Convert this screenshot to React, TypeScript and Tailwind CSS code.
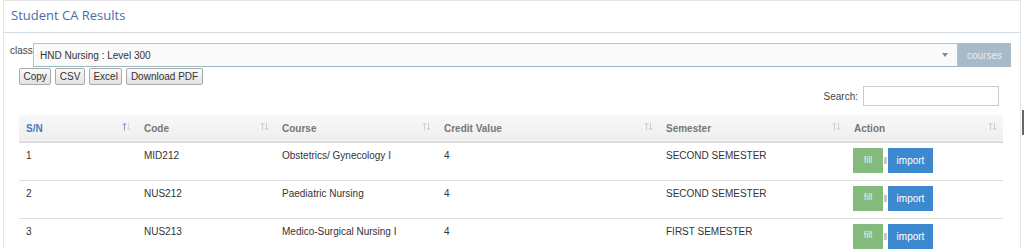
import React from "react";

function SortIcon({ active }: { active?: boolean }) {
  const up = active ? "#7a9cc6" : "#cfcfcf";
  const down = active ? "#dadada" : "#cfcfcf";
  return (
    <svg width="9" height="9" viewBox="0 0 9 9" className="shrink-0">
      <path d="M2.5 8.5V1.2M0.8 3L2.5 1.2L4.2 3" stroke={up} strokeWidth="1" fill="none" />
      <path d="M6.5 0.5V7.8M4.8 6L6.5 7.8L8.2 6" stroke={down} strokeWidth="1" fill="none" />
    </svg>
  );
}

const cols = [
  { label: "S/N", w: "w-[118px]" },
  { label: "Code", w: "w-[138px]" },
  { label: "Course", w: "w-[162px]" },
  { label: "Credit Value", w: "w-[222px]" },
  { label: "Semester", w: "w-[188px]" },
  { label: "Action", w: "w-[156px]" },
];

const rows = [
  ["1", "MID212", "Obstetrics/ Gynecology I", "4", "SECOND SEMESTER"],
  ["2", "NUS212", "Paediatric Nursing", "4", "SECOND SEMESTER"],
  ["3", "NUS213", "Medico-Surgical Nursing I", "4", "FIRST SEMESTER"],
];

export default function App() {
  return (
    <div className="relative w-[1024px] h-[249px] overflow-hidden bg-white font-['Liberation_Sans',Arial,sans-serif] text-[#333]">
      <div className="ml-[3px] w-[1018px] h-[260px] border-x border-t border-[#e4e4e4]">
        <div className="h-[32px] border-b border-[#d3dde6] pl-[7px] flex items-center">
          <span className="font-['Open_Sans',sans-serif] text-[13px] text-[#4a6da3] leading-none pb-[2px]">
            Student CA Results
          </span>
        </div>
        <div className="pl-[6px] pr-[9px] pt-[10px]">
          <div className="flex items-start">
            <span className="text-[10px] leading-none text-[#444] pt-[3px] w-[23px]">class</span>
            <div className="flex-1 h-[24px] border border-[#a9c9d1] border-b-[#97b8c0] bg-[#fafafa] flex items-center pl-[6px] pr-[9px]">
              <span className="flex-1 text-[10px] text-[#333]">HND Nursing : Level 300</span>
              <svg width="6" height="4" viewBox="0 0 6 4">
                <path d="M0 0H6L3 4Z" fill="#888" />
              </svg>
            </div>
            <div className="w-[53px] h-[24px] bg-[#a8bac7] flex items-center justify-center text-[10px] text-[#e6edf2]">
              courses
            </div>
          </div>
          <div className="flex gap-[4px] pl-[9px] mt-[1px]">
            {["Copy", "CSV", "Excel", "Download PDF"].map((b) => (
              <div
                key={b}
                className="h-[17px] px-[3.5px] border border-[#aaa] rounded-[2px] bg-gradient-to-b from-[#fafafa] to-[#e2e2e2] flex items-center text-[10px] text-[#333]"
              >
                {b}
              </div>
            ))}
          </div>
          <div className="flex justify-end items-center pr-[12px] mt-[1px] gap-[5px]">
            <span className="text-[10px] text-[#444]">Search:</span>
            <div className="w-[136px] h-[20px] border border-[#ccc] bg-white" />
          </div>
          <table className="ml-[9px] mt-[9px] table-fixed border-collapse w-[984px]">
            <thead>
              <tr className="bg-gradient-to-b from-[#f8f8f8] to-[#efefef] h-[27px] border-b-2 border-[#dcdcdc]">
                {cols.map((c, i) => (
                  <th key={c.label} className={`${c.w} px-[6px] text-left align-middle p-0`}>
                    <div className="flex items-center justify-between pl-[1px]">
                      <span
                        className={`text-[10px] font-bold ${i === 0 ? "text-[#3f7dc3]" : "text-[#777]"}`}
                      >
                        {c.label}
                      </span>
                      <span className="pr-[0px] -mt-[4px]">
                        <SortIcon active={i === 0} />
                      </span>
                    </div>
                  </th>
                ))}
              </tr>
            </thead>
            <tbody>
              {rows.map((r) => (
                <tr key={r[0]} className="h-[38px] border-b border-[#dedede]">
                  {r.map((cell, j) => (
                    <td key={j} className="px-[6px] pl-[7px] align-top pt-[5px] text-[10px] text-[#333]">
                      {cell}
                    </td>
                  ))}
                  <td className="px-[6px] align-top pt-[5px]">
                    <div className="flex items-center">
                      <div className="w-[30px] h-[25px] bg-[#85ba7d] flex items-center justify-center text-[9px] text-[#e8f2e6]">
                        fill
                      </div>
                      <div className="w-[3px] h-[7px] bg-[#c8c8c8] ml-[1px] mr-[1px]" />
                      <div className="w-[45px] h-[25px] bg-[#3c89cf] flex items-center justify-center text-[10px] text-white">
                        import
                      </div>
                    </div>
                  </td>
                </tr>
              ))}
            </tbody>
          </table>
        </div>
      </div>
      <div className="absolute left-[1022px] top-[110px] w-[2px] h-[25px] bg-[#666]" />
    </div>
  );
}
